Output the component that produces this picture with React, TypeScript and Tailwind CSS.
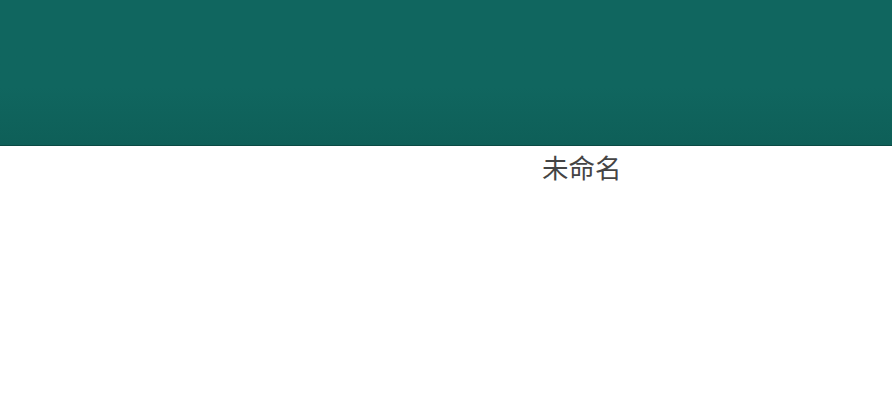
export default function App() {
  return (
    <div className="min-h-screen bg-white" style={{ fontFamily: '"Noto Sans CJK SC", "Noto Sans", sans-serif' }}>
      {/* Header */}
      <header className="h-[146px] bg-gradient-to-b from-[#10665f] from-60% to-[#0e5f58] border-b border-[#0a4a44]" />
      <div className="pl-[542px] pt-[3px]">
        <h1 className="text-[26.5px] leading-[36px] text-[#444444] font-normal">未命名</h1>
      </div>
    </div>
  )
}
